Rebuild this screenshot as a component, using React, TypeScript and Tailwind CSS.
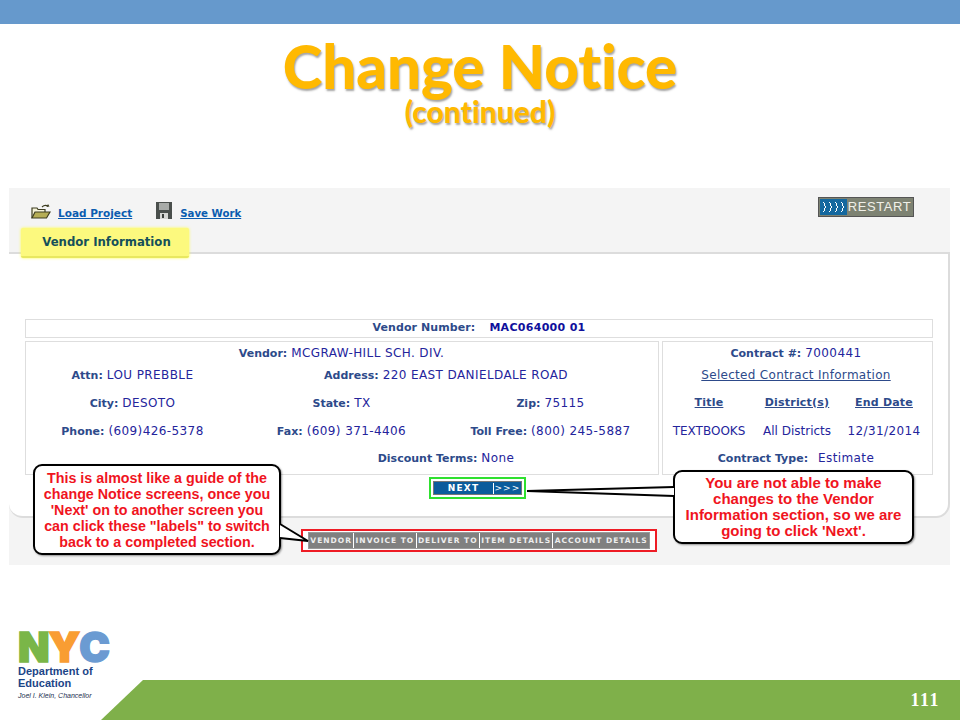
import React from 'react'

const label = 'font-bold text-[#2d4a8a]'
const value = 'text-[12px] tracking-[0.4px] text-[#24249c]'

const Field = ({ name, val, className = '', gap = 'mr-[4px]' }: { name: string; val: string; className?: string; gap?: string }) => (
  <div className={`flex items-center justify-center whitespace-nowrap ${className}`}>
    <div>
      <span className={`${label} ${gap}`}>{name}</span>
      <span className={value}>{val}</span>
    </div>
  </div>
)

const FolderIcon = () => (
  <svg width="20" height="16" viewBox="0 0 20 16">
    <path d="M1 14V4h5l1 1.500h7V8" fill="#f5f3d8" stroke="#3d3d20" strokeWidth="1.2" />
    <path d="M1 14l3-6h15l-3.500 6z" fill="#b5ad55" stroke="#3d3d20" strokeWidth="1.2" />
    <path d="M11 3c2-2 4-2 6-1" fill="none" stroke="#3d3d20" strokeWidth="1.2" />
    <path d="M17 0l1.500 2.500-3 .5z" fill="#3d3d20" />
  </svg>
)

const SaveIcon = () => (
  <svg width="16" height="17" viewBox="0 0 16 17">
    <rect width="16" height="17" fill="#4a4f4c" />
    <rect x="3" y="1" width="10" height="7" fill="#a8aba8" />
    <rect x="4" y="11" width="8" height="6" fill="#d5d6d3" />
    <rect x="6" y="12" width="2" height="4" fill="#3b3f3c" />
  </svg>
)

const RestartButton = () => (
  <div className="flex h-[20px] w-[96px] border border-[#555] bg-[#7d8272] p-px">
    <div className="flex w-[27px] items-center justify-center bg-[#14689f]">
      <svg width="23" height="12" viewBox="0 0 23 12" fill="none" stroke="#fff" strokeWidth="1">
        <path d="M1 1l2 2-1 1 2 2-2 2 1 1-2 2" />
        <path d="M7 1l2 2-1 1 2 2-2 2 1 1-2 2" />
        <path d="M13 1l2 2-1 1 2 2-2 2 1 1-2 2" />
        <path d="M19 1l2 2-1 1 2 2-2 2 1 1-2 2" />
      </svg>
    </div>
    <div className="flex flex-1 items-center justify-center font-['Liberation_Sans',sans-serif] text-[13px] tracking-[0.6px] text-[#f0f0e8]">
      RESTART
    </div>
  </div>
)

const crumbs = ['VENDOR', 'INVOICE TO', 'DELIVER TO', 'ITEM DETAILS', 'ACCOUNT DETAILS']

const Callout = ({ className, children }: { className: string; children: React.ReactNode }) => (
  <div
    className={`absolute z-20 flex flex-col items-center justify-center rounded-[9px] border-2 border-black bg-white text-center font-['Liberation_Sans',sans-serif] leading-[16px] font-bold text-[#f0141e] shadow-[1px_1px_2px_rgba(0,0,0,0.4)] ${className}`}
  >
    {children}
  </div>
)

export default function App() {
  return (
    <div className="relative flex h-[720px] w-[960px] flex-col overflow-hidden bg-white">
      <div className="h-6 shrink-0 bg-[#6699cc]" />

      <div className="flex h-[164px] shrink-0 flex-col items-center pt-[12px] font-['Lato',sans-serif] font-black text-[#ffb901] [font-variant-ligatures:none] [text-shadow:1px_2px_2px_rgba(90,90,90,0.55)]">
        <div className="text-[60px] leading-[60px]">Change Notice</div>
        <div className="text-[30px] leading-[30px]">(continued)</div>
      </div>

      {/* screenshot of the vendor page */}
      <div className="relative ml-[9px] flex h-[377px] w-[941px] shrink-0 flex-col bg-[#f4f4f4] font-['DejaVu_Sans',sans-serif] text-[11px]">
        <div className="flex h-[64px] shrink-0 flex-col justify-between">
          <div className="flex items-start justify-between pt-[9px] pr-[36px] pl-[22px]">
            <div className="flex items-center gap-[24px] pt-[5px] text-[10.5px] font-bold text-[#0b5cb0] underline">
              <div className="flex items-center gap-[7px]">
                <FolderIcon />
                <span className="mt-[4px]">Load Project</span>
              </div>
              <div className="flex items-center gap-[8px]">
                <div className="mt-[-3px]">
                  <SaveIcon />
                </div>
                <span className="mt-[4px] text-[10.2px]">Save Work</span>
              </div>
            </div>
            <RestartButton />
          </div>
          <div className="relative z-10 mb-[-6px] ml-[12px] flex h-[30px] w-[168px] items-center justify-center rounded-[2px] border-b-2 border-b-[#e8e860] bg-[#fcf97e] pt-[1px] pl-[3px] text-[11.7px] font-bold text-[#14505a] shadow-[0_0_3px_#ffff40]">
            Vendor Information
          </div>
        </div>

        <div className="flex h-[266px] shrink-0 flex-col rounded-b-[14px] border-t-2 border-r-2 border-b-2 border-[#dcdcdc] bg-white px-[16px] pt-[65px]">
          <div className="flex h-[19px] w-[908px] shrink-0 items-center justify-center gap-[14px] border border-[#dedede] font-bold">
            <span className="tracking-[0.1px] text-[#2d4a8a]">Vendor Number:</span>
            <span className="tracking-[0.3px] text-[#10109c]">MAC064000 01</span>
          </div>

          <div className="mt-[3px] flex h-[134px] w-[908px] shrink-0 gap-[3px]">
            <div className="grid w-[634px] grid-cols-[209px_209px_209px] grid-rows-[22px_22px_34px_22px_33px] border border-[#dedede] pl-[2px]">
              <Field name="Vendor:" val="MCGRAW-HILL SCH. DIV." className="col-span-3" />
              <Field name="Attn:" val="LOU PREBBLE" />
              <Field name="Address:" val="220 EAST DANIELDALE ROAD" className="col-span-2" />
              <Field name="City:" val="DESOTO" />
              <Field name="State:" val="TX" />
              <Field name="Zip:" val="75115" />
              <Field name="Phone:" val="(609)426-5378" />
              <Field name="Fax:" val="(609) 371-4406" />
              <Field name="Toll Free:" val="(800) 245-5887" />
              <Field name="Discount Terms:" val="None" className="col-span-2 col-start-2" />
            </div>
            <div className="grid w-[271px] grid-cols-[92px_84px_90px] grid-rows-[22px_22px_34px_22px_33px] border border-[#dedede]">
              <Field name="Contract #:" val="7000441" className="col-span-3" />
              <div className="col-span-3 flex items-center justify-center text-[12px] tracking-[0.3px] text-[#2d4a8a] underline">
                Selected Contract Information
              </div>
              <div className="flex items-center justify-center font-bold tracking-[0.2px] text-[#2d4a8a] underline">Title</div>
              <div className="flex items-center justify-center font-bold tracking-[0.2px] text-[#2d4a8a] underline">District(s)</div>
              <div className="flex items-center justify-center font-bold tracking-[0.2px] text-[#2d4a8a] underline">End Date</div>
              <div className="flex items-center justify-center text-[12px] text-[#24249c]">TEXTBOOKS</div>
              <div className="flex items-center justify-center text-[12px] text-[#24249c]">All Districts</div>
              <div className="flex items-center justify-center text-[12px] tracking-[0.4px] text-[#24249c]">12/31/2014</div>
              <Field name="Contract Type:" val="Estimate" className="col-span-3" gap="mr-[10px]" />
            </div>
          </div>

          <div className="mt-[2px] ml-[404px] flex h-[22px] w-[97px] border-2 border-[#2fe02f] bg-white p-[2px]">
            <div className="flex flex-1 border border-[#777] bg-[#0b5c9c] pt-px text-[9px] font-bold tracking-[1.2px] text-white">
              <div className="flex w-[60px] items-center justify-center border-r border-white">NEXT</div>
              <div className="flex flex-1 items-center justify-center font-normal">{'>>>'}</div>
            </div>
          </div>
        </div>

        <div className="mt-[11px] ml-[292px] flex h-[23px] w-[356px] border-2 border-[#ee1c25] bg-white px-[5px] py-px">
          <div className="flex flex-1 gap-px border border-[#999] bg-white">
            {crumbs.map(c => (
              <div
                key={c}
                className="flex flex-auto items-center justify-center bg-[#808080] text-[7.5px] font-bold tracking-[1px] whitespace-nowrap text-[#eee]"
              >
                {c}
              </div>
            ))}
          </div>
        </div>

        <Callout className="top-[276px] left-[24px] h-[91px] w-[248px] text-[14.3px]">
          <span>This is almost like a guide of the</span>
          <span>change Notice screens, once you</span>
          <span>'Next' on to another screen you</span>
          <span>can click these "labels" to switch</span>
          <span>back to a completed section.</span>
        </Callout>

        <Callout className="top-[282px] left-[664px] h-[74px] w-[241px] text-[15px]">
          <span>You are not able to make</span>
          <span>changes to the Vendor</span>
          <span>Information section, so we are</span>
          <span>going to click 'Next'.</span>
        </Callout>

        {/* callout tails */}
        <svg className="absolute top-0 left-0 z-30" width="941" height="377" fill="#fff" stroke="#000" strokeWidth="2">
          <path d="M665 299L518 303L665 308" />
          <path d="M271 336L299 353L271 350" />
        </svg>
      </div>

      <div className="flex min-h-0 flex-1">
        <div className="w-[101px] shrink-0 pt-[66px] pl-[18px]">
          <div className="flex h-[32px] items-center font-['Inter',sans-serif] text-[41px] leading-[32px] font-black tracking-[-1px] whitespace-nowrap [-webkit-text-stroke:1.5px_currentColor]">
            <span className="text-[#7ab648]">N</span>
            <span className="text-[#f99d33]">Y</span>
            <span className="text-[#6b9bd2]">C</span>
          </div>
          <div className="mt-[3px] font-['Liberation_Sans',sans-serif] text-[11px] leading-[11.500px] font-bold whitespace-nowrap text-[#1c4587]">
            Department of
            <br />
            Education
          </div>
          <div className="mt-[2px] font-['Liberation_Sans',sans-serif] text-[7px] leading-[10px] whitespace-nowrap text-[#1c3050] italic">
            Joel I. Klein, Chancellor
          </div>
        </div>
        <div className="flex h-10 flex-1 items-center justify-end self-end bg-[#7fb04a] pr-[20px] font-['Liberation_Serif',serif] text-[18px] font-bold tracking-[1.5px] text-white [clip-path:polygon(42px_0,100%_0,100%_100%,0_100%)]">
          111
        </div>
      </div>
    </div>
  )
}
